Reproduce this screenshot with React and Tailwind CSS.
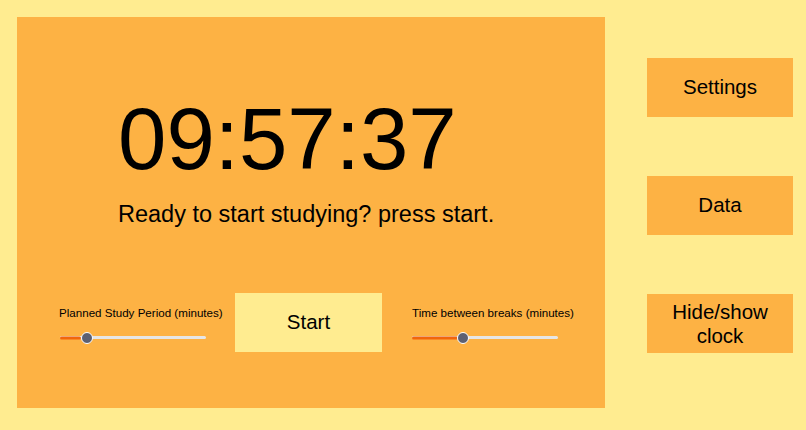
import React from "react";

function Slider({ fill, thumb }) {
  return (
    <div className="relative h-[12px] w-[146px] flex items-center">
      <div className="h-[3px] w-full bg-[#e6e6e6] rounded-full" />
      <div
        className="absolute left-0 top-1/2 -translate-y-1/2 h-[3px] bg-[#f2650c] rounded-full"
        style={{ width: fill }}
      />
      <div
        className="absolute top-1/2 -translate-y-1/2 -translate-x-1/2 w-[12px] h-[12px] rounded-full bg-[#5c6072] border-[1.5px] border-white"
        style={{ left: thumb }}
      />
    </div>
  );
}

export default function App() {
  return (
    <div
      className="w-[806px] h-[430px] bg-[#ffec90] flex pl-[17px] pt-[17px] text-black"
      style={{ fontFamily: '"Liberation Sans", Arial, sans-serif' }}
    >
      <div className="w-[588px] h-[391px] bg-[#fdb244] flex flex-col pt-[78px]">
        <div className="ml-[101px] text-[87px] leading-none">09:57:37</div>
        <div className="ml-[101px] mt-[21px] text-[23.5px] leading-none">
          Ready to start studying? press start.
        </div>
        <div className="flex items-start mt-[66.5px] pl-[42px]">
          <div className="w-[164px] flex flex-col pt-[13.5px]">
            <div className="text-[11.6px] leading-none whitespace-nowrap">
              Planned Study Period (minutes)
            </div>
            <div className="mt-[13.5px] ml-[1px]">
              <Slider fill="21px" thumb="27px" />
            </div>
          </div>
          <div className="ml-[12px] w-[147px] h-[59px] bg-[#ffec90] flex items-center justify-center text-[20.5px]">
            Start
          </div>
          <div className="ml-[30px] w-[164px] flex flex-col pt-[13.5px]">
            <div className="text-[11.6px] leading-none whitespace-nowrap">
              Time between breaks (minutes)
            </div>
            <div className="mt-[13.5px]">
              <Slider fill="46px" thumb="51px" />
            </div>
          </div>
        </div>
      </div>
      <div className="ml-[42px] mt-[41px] flex flex-col gap-[59px]">
        <div className="w-[146px] h-[59px] bg-[#fdb244] flex items-center justify-center text-[20.5px]">
          Settings
        </div>
        <div className="w-[146px] h-[59px] bg-[#fdb244] flex items-center justify-center text-[20.5px]">
          Data
        </div>
        <div className="w-[146px] h-[59px] bg-[#fdb244] flex items-center justify-center text-center text-[20.5px] leading-[24px]">
          Hide/show
          <br />
          clock
        </div>
      </div>
    </div>
  );
}
